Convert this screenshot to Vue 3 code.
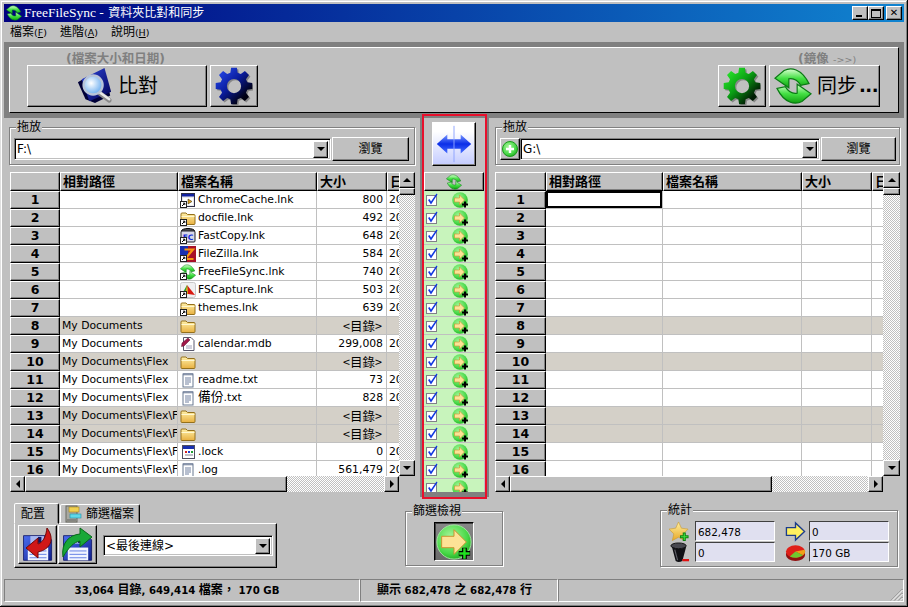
<script setup>
const gearPath = (() => {
  const teeth = 8, c = 20, ro = 19.5, ri = 14.5, step = (Math.PI * 2) / teeth
  let d = ''
  for (let i = 0; i < teeth; i++) {
    const a = i * step - Math.PI / 2
    const pts = [[ri, a - step * 0.34], [ro, a - step * 0.2], [ro, a + step * 0.2], [ri, a + step * 0.34]]
    pts.forEach(([r, t], j) => {
      d += (i === 0 && j === 0 ? 'M' : 'L') + (c + r * Math.cos(t)).toFixed(2) + ' ' + (c + r * Math.sin(t)).toFixed(2) + ' '
    })
  }
  return d + 'Z M20 12.5 A7.5 7.5 0 1 0 20 27.5 A7.5 7.5 0 1 0 20 12.5 Z'
})()

const leftRows = [
  { path: '', icon: 'win', lnk: true, name: 'ChromeCache.lnk', size: '800', date: '20' },
  { path: '', icon: 'folder', lnk: true, name: 'docfile.lnk', size: '492', date: '20' },
  { path: '', icon: 'fc', lnk: true, name: 'FastCopy.lnk', size: '648', date: '20' },
  { path: '', icon: 'fz', lnk: true, name: 'FileZilla.lnk', size: '584', date: '20' },
  { path: '', icon: 'sync', lnk: true, name: 'FreeFileSync.lnk', size: '740', date: '20' },
  { path: '', icon: 'fsc', lnk: true, name: 'FSCapture.lnk', size: '503', date: '20' },
  { path: '', icon: 'folder', lnk: true, name: 'themes.lnk', size: '639', date: '20' },
  { path: 'My Documents', icon: 'folder', name: '', size: '<目錄>', dir: true },
  { path: 'My Documents', icon: 'mdb', name: 'calendar.mdb', size: '299,008', date: '20' },
  { path: 'My Documents\\Flex', icon: 'folder', name: '', size: '<目錄>', dir: true },
  { path: 'My Documents\\Flex', icon: 'txt', name: 'readme.txt', size: '73', date: '20' },
  { path: 'My Documents\\Flex', icon: 'txt', cjk: '備份', name: '.txt', size: '828', date: '20' },
  { path: 'My Documents\\Flex\\Flex', icon: 'folder', name: '', size: '<目錄>', dir: true },
  { path: 'My Documents\\Flex\\Flex', icon: 'folder', name: '', size: '<目錄>', dir: true },
  { path: 'My Documents\\Flex\\Flex', icon: 'lock', name: '.lock', size: '0', date: '20' },
  { path: 'My Documents\\Flex\\Flex', icon: 'txt', name: '.log', size: '561,479', date: '20' }
]
const rightRows = leftRows.map((r) => ({ path: '', icon: '', name: '', size: '', date: '', dir: r.dir }))
const panes = [
  { key: 'l', value: 'F:\\', rows: leftRows, right: false },
  { key: 'r', value: 'G:\\', rows: rightRows, right: true }
]
const midRows = Array.from({ length: 17 }, (_, i) => i)
const headers = ['相對路徑', '檔案名稱', '大小', '日']
</script>

<template>
  <div class="window">
    <svg class="defs" aria-hidden="true">
      <defs>
        <linearGradient id="gBlue" x1="0" y1="0" x2="1" y2="1"><stop offset="0" stop-color="#2a50f8" /><stop offset=".45" stop-color="#0a1c9c" /><stop offset=".8" stop-color="#000010" /></linearGradient>
        <linearGradient id="gGreen" x1="0" y1="0" x2="1" y2="1"><stop offset="0" stop-color="#30f830" /><stop offset=".45" stop-color="#0aa014" /><stop offset=".8" stop-color="#001c04" /></linearGradient>
        <linearGradient id="gSync" x1="0" y1="0" x2="0" y2="1"><stop offset="0" stop-color="#d8ffd0" /><stop offset=".5" stop-color="#44e044" /><stop offset="1" stop-color="#10a010" /></linearGradient>
        <radialGradient id="gBall" cx=".4" cy=".35" r=".7"><stop offset="0" stop-color="#a8f59a" /><stop offset=".7" stop-color="#48d848" /><stop offset="1" stop-color="#20a820" /></radialGradient>
        <radialGradient id="gLens" cx=".4" cy=".4" r=".6"><stop offset="0" stop-color="#fff" /><stop offset="1" stop-color="#70b0f0" /></radialGradient>
        <linearGradient id="gSheet" x1="0" y1="0" x2="1" y2="1"><stop offset="0" stop-color="#3048e0" /><stop offset="1" stop-color="#000050" /></linearGradient>
        <linearGradient id="gSwap" x1="0" y1="0" x2="0" y2="1"><stop offset="0" stop-color="#7a98ff" /><stop offset=".5" stop-color="#0a2ee8" /><stop offset="1" stop-color="#4a70ff" /></linearGradient>
        <linearGradient id="gFolder" x1="0" y1="0" x2="0" y2="1"><stop offset="0" stop-color="#fff0a8" /><stop offset="1" stop-color="#e8b040" /></linearGradient>
        <linearGradient id="gDisk" x1="0" y1="0" x2="1" y2="1"><stop offset="0" stop-color="#4a6cf0" /><stop offset="1" stop-color="#10208c" /></linearGradient>
        <linearGradient id="gStar" x1="0" y1="0" x2="0" y2="1"><stop offset="0" stop-color="#fff0a0" /><stop offset="1" stop-color="#e8a828" /></linearGradient>

        <symbol id="sync" viewBox="0 0 32 32">
          <g fill="url(#gSync)" stroke="#0a7a14" stroke-width="1">
            <path d="M0.8 9.5 L8.5 3 C14 0 23 1 29.5 14 L22.5 15.5 C19.5 10.5 15.5 9.5 12.5 10 L12.5 17.5 Z" />
            <path d="M31.2 22.5 L23.5 29 C18 32 9 31 2.5 18 L9.5 16.5 C12.5 21.5 16.5 22.5 19.5 22 L19.5 14.5 Z" />
          </g>
        </symbol>
        <symbol id="cmp" viewBox="0 0 40 40">
          <polygon points="2,16 10,34 20,38 36,30 30,4 12,10" fill="#000038" />
          <polygon points="6,13 30,1 37,26 14,36" fill="url(#gSheet)" />
          <path d="M24 27 L35 35" stroke="#8a8a8a" stroke-width="5" stroke-linecap="round" />
          <path d="M24 26 L35 34" stroke="#e8e8e8" stroke-width="2.5" stroke-linecap="round" />
          <circle cx="18" cy="19" r="10" fill="url(#gLens)" stroke="#b8c4d8" stroke-width="2.5" />
        </symbol>
        <symbol id="gearB" viewBox="0 0 40 40">
          <path :d="gearPath" transform="translate(1.5 1.5)" fill="#606060" fill-rule="evenodd" opacity=".6" />
          <path :d="gearPath" fill="url(#gBlue)" fill-rule="evenodd" />
        </symbol>
        <symbol id="gearG" viewBox="0 0 40 40">
          <path :d="gearPath" transform="translate(1.5 1.5)" fill="#606060" fill-rule="evenodd" opacity=".6" />
          <path :d="gearPath" fill="url(#gGreen)" fill-rule="evenodd" />
        </symbol>
        <symbol id="swap" viewBox="0 0 44 44">
          <path d="M4 22 L15 12 L15 17 L29 17 L29 12 L40 22 L29 32 L29 27 L15 27 L15 32 Z" fill="url(#gSwap)" />
          <path d="M22 3 V41" stroke="#8ea4ff" stroke-width="1" />
        </symbol>
        <symbol id="add" viewBox="0 0 16 16">
          <circle cx="8" cy="8" r="7.5" fill="url(#gBall)" stroke="#1a9a1a" />
          <path d="M8 4 V12 M4 8 H12" stroke="#fff" stroke-width="2.4" />
        </symbol>
        <symbol id="chk" viewBox="0 0 12 13">
          <rect x=".5" y="2.5" width="10" height="10" fill="#fff" stroke="#808088" />
          <path d="M2 7 L3.5 6 L5 8.5 L10.5 0.5 L11.5 1.5 L5 11.5 Z" fill="#1038e0" />
        </symbol>
        <symbol id="go" viewBox="0 0 16 16">
          <circle cx="8" cy="8" r="7.8" fill="url(#gBall)" />
          <path d="M2.5 6 H7.5 V3 L12.5 8 L7.5 13 V10 H2.5 Z" fill="#fde296" stroke="#c8902a" stroke-width=".6" />
          <path d="M13 9.5 V15.5 M10 12.5 H16" stroke="#000" stroke-width="2" />
        </symbol>
        <symbol id="goBig" viewBox="0 0 40 40">
          <circle cx="20" cy="20" r="18" fill="url(#gBall)" stroke="#a0e8a0" />
          <path d="M7 14 H20 V7 L33 20 L20 33 V26 H7 Z" fill="#fde296" stroke="#c8902a" />
          <path d="M31 26 V38 M25 32 H37" stroke="#000" stroke-width="5" />
          <path d="M31 26.5 V37.5 M25.5 32 H36.5" stroke="#20e020" stroke-width="2.6" />
        </symbol>
        <symbol id="sc" viewBox="0 0 7 7">
          <rect x=".5" y=".5" width="6" height="6" fill="#fff" stroke="#222" />
          <path d="M2 5 L4.5 2.5 M3 2.2 H4.8 V4" stroke="#000" fill="none" />
        </symbol>
        <symbol id="win" viewBox="0 0 16 16">
          <rect x="1.5" y="1.5" width="13" height="13" fill="#e8e8e8" stroke="#303048" />
          <rect x="2" y="2" width="12" height="2.5" fill="#1020a0" />
          <rect x="3" y="6" width="10" height="7" fill="#fff" />
          <path d="M8 7 L12 9.5 L8 12 Z" fill="#d8a020" stroke="#302000" stroke-width=".5" />
        </symbol>
        <symbol id="folder" viewBox="0 0 16 16">
          <path d="M1 13.5 V4 Q1 3 2 3 H6 L7.5 4.5 H14 Q15 4.5 15 5.5 V13.5 Q15 14.5 14 14.5 H2 Q1 14.5 1 13.5 Z" fill="url(#gFolder)" stroke="#94701c" />
          <path d="M1.5 6.5 H14.5" stroke="#fff8d0" />
        </symbol>
        <symbol id="fc" viewBox="0 0 16 16">
          <ellipse cx="8" cy="3" rx="6.5" ry="2.5" fill="#505058" stroke="#000" />
          <rect x="1" y="3" width="14" height="11" rx="1" fill="#d8d8e8" stroke="#202028" />
          <text x="8" y="12" text-anchor="middle" font-family="DejaVu Sans" font-weight="700" font-size="7.5" fill="#1028d8">FC</text>
        </symbol>
        <symbol id="fz" viewBox="0 0 16 16">
          <rect width="16" height="16" fill="#a81028" />
          <rect width="8" height="9" fill="#1830b0" />
          <path d="M4.5 3.5 H13 L5 13 H13.5" fill="none" stroke="#f89810" stroke-width="2.2" />
        </symbol>
        <symbol id="fsc" viewBox="0 0 16 16">
          <rect x=".5" y=".5" width="15" height="15" rx="2" fill="#f0f0f0" stroke="#c8c8c8" />
          <path d="M7 3 L15 13 L8 12 Z" fill="#d81810" />
          <path d="M7 3 L1.5 13 L8 12 Z" fill="#20a030" />
          <path d="M7 3 L8 12 L5 12 Z" fill="#f0a010" />
        </symbol>
        <symbol id="mdb" viewBox="0 0 16 16">
          <path d="M3.5 1.5 H11 L14 4.5 V14.5 H3.5 Z" fill="#fff" stroke="#58586c" />
          <path d="M2 7 L8 2 L10 4 L4 10 L1.5 10.5 Z" fill="#a01848" stroke="#601030" stroke-width=".5" />
          <path d="M6 12 H12 M6 10 H12" stroke="#a0a0b8" />
        </symbol>
        <symbol id="txt" viewBox="0 0 16 16">
          <rect x="3" y="2" width="10" height="13" fill="#fff" stroke="#687890" />
          <path d="M4 1 V3.5 M6 1 V3.5 M8 1 V3.5 M10 1 V3.5 M12 1 V3.5" stroke="#607090" />
          <path d="M5 6 H11 M5 8 H11 M5 10 H11 M5 12 H9" stroke="#7080a0" />
        </symbol>
        <symbol id="lock" viewBox="0 0 16 16">
          <rect x="2.5" y="1.5" width="12" height="13" fill="#fff" stroke="#505060" />
          <rect x="3" y="2" width="11" height="3" fill="#1830b0" />
          <rect x="5" y="7" width="2" height="2" fill="#d82020" /><rect x="8" y="7" width="2" height="2" fill="#2040d0" /><rect x="11" y="7" width="2" height="2" fill="#20a030" />
          <path d="M5 11 H13" stroke="#808090" />
        </symbol>
        <symbol id="floppy" viewBox="0 0 40 40">
          <path d="M3 9 H31 L36 14 V38 H3 Z" fill="url(#gDisk)" stroke="#101868" />
          <rect x="11" y="9.5" width="16" height="9" fill="#a8b8f0" />
          <rect x="20" y="10.5" width="4" height="7" fill="#101868" />
          <rect x="8" y="23" width="24" height="15" fill="#f0f4ff" />
          <path d="M10 27 H30 M10 31 H30 M10 35 H30" stroke="#5070e0" />
        </symbol>
        <symbol id="cab" viewBox="0 0 18 18">
          <rect x="2" y="1" width="11" height="16" fill="#a8a8a0" stroke="#686860" />
          <rect x="5" y="2" width="10" height="5" fill="#f0d050" stroke="#a08020" stroke-width=".6" />
          <rect x="6" y="9" width="11" height="4" fill="#60d8e8" stroke="#2090a8" stroke-width=".6" />
          <path d="M3 15 H12" stroke="#606060" />
        </symbol>
        <symbol id="star" viewBox="0 0 22 22">
          <path d="M10 1 L13 7.5 L20 8.5 L15 13.5 L16.5 20.5 L10 17 L3.5 20.5 L5 13.5 L0 8.5 L7 7.5 Z" fill="url(#gStar)" stroke="#c89828" stroke-width=".6" />
          <path d="M16 12 V21 M11.5 16.5 H20.5" stroke="#108010" stroke-width="3.2" />
          <path d="M16 13 V20 M12.5 16.5 H19.5" stroke="#40e040" stroke-width="1.2" />
        </symbol>
        <symbol id="trash" viewBox="0 0 22 22">
          <ellipse cx="10" cy="4" rx="8" ry="3" fill="#484850" stroke="#101010" />
          <path d="M3 5 L7 20 Q10 22 14 20 L18 5 Q10 9 3 5 Z" fill="#101014" />
          <path d="M6 8 L9 19" stroke="#606068" stroke-width="1.2" />
          <path d="M14 19 H21" stroke="#e01010" stroke-width="2.4" />
        </symbol>
        <symbol id="yarrow" viewBox="0 0 22 22">
          <path d="M1.5 7 H11 V2 L20.5 11 L11 20 V15 H1.5 Z" fill="#fff060" stroke="#1c3c8c" stroke-width="1.4" />
        </symbol>
        <symbol id="pie" viewBox="0 0 22 22">
          <ellipse cx="11" cy="13.5" rx="10" ry="6.5" fill="#901010" />
          <ellipse cx="11" cy="10" rx="10" ry="6.5" fill="#e02018" />
          <path d="M11 10 L20.5 8 A10 6.5 0 0 1 19 14 Z" fill="#f0a018" />
          <path d="M11 10 L19 14 A10 6.5 0 0 1 5 15.2 Z" fill="#70c830" />
        </symbol>
      </defs>
    </svg>

    <div class="titlebar">
      <svg class="tb-icon"><use href="#sync" /></svg>
      <span class="tb-text">FreeFileSync - <span class="tb-cjk">資料夾比對和同步</span></span>
      <div class="tb-btns">
        <span class="btn tb-btn"><i class="g-min"></i></span>
        <span class="btn tb-btn"><i class="g-max"></i></span>
        <span class="btn tb-btn tb-close">✕</span>
      </div>
    </div>

    <div class="menubar">
      <span>檔案<small>(<u>F</u>)</small></span>
      <span>進階<small>(<u>A</u>)</small></span>
      <span>說明<small>(<u>H</u>)</small></span>
    </div>

    <div class="toppanel">
      <div class="topinner">
        <div class="topblock">
          <div class="hint hint-l">(檔案大小和日期)</div>
          <div class="btnrow">
            <button class="btn compare"><svg class="i38"><use href="#cmp" /></svg><span class="bigtext">比對</span></button>
            <button class="btn gearbtn"><svg class="i38"><use href="#gearB" /></svg></button>
          </div>
        </div>
        <div class="topblock">
          <div class="hint hint-r">(鏡像 <span class="hint-thin">-&gt;&gt;)</span></div>
          <div class="btnrow">
            <button class="btn gearbtn"><svg class="i38"><use href="#gearG" /></svg></button>
            <button class="btn syncbtn"><svg class="i38"><use href="#sync" /></svg><span class="bigtext">同步</span><b class="dots">...</b></button>
          </div>
        </div>
      </div>
    </div>

    <div class="main">
      <section v-for="p in panes" :key="p.key" class="pane" :class="p.key">
        <div class="group pathgroup">
          <span class="legend">拖放</span>
          <div class="pathrow">
            <button v-if="p.right" class="btn addbtn"><svg class="i16"><use href="#add" /></svg></button>
            <div class="combo pathcombo">
              <span class="combotext">{{ p.value }}</span>
              <span class="btn combobtn"><i class="tri-d"></i></span>
            </div>
            <button class="btn browse">瀏覽</button>
          </div>
        </div>

        <div class="grid">
          <div class="table">
            <div class="row head">
              <div class="btn lbl"></div>
              <div v-for="h in headers" :key="h" class="btn hcell">{{ h }}</div>
            </div>
            <div v-for="(r, i) in p.rows" :key="i" class="row" :class="{ dir: r.dir }">
              <div class="btn lbl">{{ i + 1 }}</div>
              <div class="cell" :class="{ selected: p.right && i === 0 }">{{ r.path }}</div>
              <div class="cell namecell">
                <span v-if="r.icon" class="fileicon">
                  <svg class="i16"><use :href="'#' + r.icon" /></svg>
                  <svg v-if="r.lnk" class="scicon"><use href="#sc" /></svg>
                </span>
                <span class="fname"><span v-if="r.cjk" class="cjk">{{ r.cjk }}</span>{{ r.name }}</span>
              </div>
              <div class="cell sizecell" :class="{ dirsize: r.dir }">{{ r.size }}</div>
              <div class="cell">{{ r.date }}</div>
            </div>
          </div>
          <div class="vs">
            <span class="btn sb"><i class="tri-u"></i></span>
            <span class="btn vthumb"></span>
            <span class="track"></span>
            <span class="btn sb"><i class="tri-d"></i></span>
          </div>
          <div class="hs">
            <span class="btn sb"><i class="tri-l"></i></span>
            <span class="btn hthumb"></span>
            <span class="track"></span>
            <span class="btn sb"><i class="tri-r"></i></span>
          </div>
        </div>
      </section>

      <section class="mid">
        <button class="btn swapbtn"><svg class="i44"><use href="#swap" /></svg></button>
        <div class="midgrid">
          <div class="btn midhead"><svg class="i16"><use href="#sync" /></svg></div>
          <div v-for="m in midRows" :key="m" class="midrow">
            <svg class="chk"><use href="#chk" /></svg>
            <svg class="i16 goicon"><use href="#go" /></svg>
          </div>
        </div>
      </section>
    </div>

    <div class="bottom">
      <div class="cfg">
        <div class="tabs">
          <span class="tab active">配置</span>
          <span class="tab"><svg class="tabicon"><use href="#cab" /></svg>篩選檔案</span>
        </div>
        <div class="tabpanel">
          <button class="btn disk">
            <svg class="i34"><use href="#floppy" /></svg>
            <svg class="swoosh" viewBox="0 0 34 34"><path d="M26 1 C34 12 30 22 17 25 L17 31 L5 21 L17 11 L17 17 C23 15 25 8 26 1 Z" fill="#d01818" stroke="#700808" /></svg>
          </button>
          <button class="btn disk">
            <svg class="i34"><use href="#floppy" /></svg>
            <svg class="swoosh" viewBox="0 0 34 34"><path d="M2 30 C0 16 8 8 19 7 L19 1 L31 10 L19 20 L19 14 C13 15 8 20 2 30 Z" fill="#18a838" stroke="#086818" /></svg>
          </button>
          <div class="combo cfgcombo">
            <span class="combotext">&lt;最後連線&gt;</span>
            <span class="btn combobtn"><i class="tri-d"></i></span>
          </div>
        </div>
      </div>

      <div class="group filtergroup">
        <span class="legend">篩選檢視</span>
        <button class="filterbtn"><svg class="i38"><use href="#goBig" /></svg></button>
      </div>

      <div class="group statsgroup">
        <span class="legend">統計</span>
        <div class="stats">
          <svg class="i21"><use href="#star" /></svg><span class="statbox">682,478</span>
          <svg class="i21"><use href="#yarrow" /></svg><span class="statbox">0</span>
          <svg class="i21"><use href="#trash" /></svg><span class="statbox">0</span>
          <svg class="i21"><use href="#pie" /></svg><span class="statbox">170 GB</span>
        </div>
      </div>
    </div>

    <div class="status">
      <div class="st st1"><span>33,064 <span class="cjk">目錄</span>, 649,414 <span class="cjk">檔案，</span> 170 GB</span></div>
      <div class="st st2"><span><span class="cjk">顯示</span> 682,478 <span class="cjk">之</span> 682,478 <span class="cjk">行</span></span></div>
      <div class="st st3">
        <svg class="grip" viewBox="0 0 13 13"><path d="M12.5 1 L1 12.5 M12.5 5 L5 12.5 M12.5 9 L9 12.5" stroke="#808080" fill="none" /><path d="M12.5 2 L2 12.5 M12.5 6 L6 12.5 M12.5 10 L10 12.5" stroke="#fff" fill="none" /></svg>
      </div>
    </div>

    <div class="redbox"></div>
  </div>
</template>

<style>
html, body { margin: 0; background: #c0c0c0; }
</style>

<style scoped>
* { box-sizing: border-box; }
.window {
  --f: "DejaVu Sans", "Noto Sans CJK TC", sans-serif;
  position: relative;
  width: 908px;
  height: 607px;
  padding: 4px 4px 5px;
  display: flex;
  flex-direction: column;
  overflow: hidden;
  background: #c0c0c0;
  color: #000;
  font: 12px/14px var(--f);
  box-shadow: inset -1px -1px #000, inset 1px 1px #dfdfdf, inset -2px -2px #808080, inset 2px 2px #fff;
}
.defs { position: absolute; width: 0; height: 0; }
.btn {
  display: flex;
  align-items: center;
  justify-content: center;
  padding: 0;
  font: inherit;
  color: inherit;
  background: #c0c0c0;
  border: 1px solid;
  border-color: #fff #000 #000 #fff;
  box-shadow: inset -1px -1px #808080;
}
i { display: block; width: 0; height: 0; border-style: solid; border-color: transparent; }
.tri-d { border-width: 4px 4px 0; border-top-color: #000; }
.tri-u { border-width: 0 4px 4px; border-bottom-color: #000; }
.tri-l { border-width: 4px 4px 4px 0; border-right-color: #000; }
.tri-r { border-width: 4px 0 4px 4px; border-left-color: #000; }
.i16 { width: 16px; height: 16px; display: block; }
.i21 { width: 21px; height: 21px; display: block; }
.i34 { width: 34px; height: 34px; display: block; }
.i38 { width: 38px; height: 38px; display: block; }
.i44 { width: 42px; height: 42px; display: block; }

.titlebar {
  height: 18px;
  flex: none;
  display: flex;
  align-items: center;
  padding-left: 2px;
  background: linear-gradient(90deg, #000080, #1084d0);
  color: #fff;
}
.tb-icon { width: 16px; height: 16px; flex: none; }
.tb-text { margin-left: 2px; font: 13.5px/18px "Liberation Serif", "Noto Sans CJK TC", serif; white-space: pre; }
.tb-cjk { font-size: 12px; margin-left: 1px; }
.tb-btns { margin-left: auto; margin-right: 2px; display: flex; }
.tb-btn { width: 16px; height: 14px; position: relative; }
.tb-close { margin-left: 2px; font-size: 10px; line-height: 1; font-weight: 700; color: #000; }
.g-min { width: 6px; height: 2px; background: #000; border: 0; margin-top: 6px; margin-right: 3px; }
.g-max { width: 10px; height: 9px; border: 1px solid #000; border-top-width: 2px; }

.menubar {
  height: 20px;
  flex: none;
  display: flex;
  gap: 13px;
  align-items: center;
  padding-left: 6px;
  font-size: 12px;
}
.menubar small { font-size: 9.5px; }

.toppanel { height: 76px; flex: none; padding: 5px; background: #808080; }
.topinner {
  height: 66px;
  display: flex;
  justify-content: space-between;
  padding: 4px 18px 0 17px;
  background: #c0c0c0;
  border: 1px solid;
  border-color: #fff #000 #000 #fff;
}
.hint { height: 13px; font-weight: 700; color: #808080; font-size: 12.5px; line-height: 13px; white-space: nowrap; }
.hint-l { padding-left: 39px; }
.hint-r { padding-left: 80px; }
.hint-thin { font-weight: 400; font-size: 9.5px; }
.btnrow { display: flex; gap: 3px; margin-top: 0; }
.compare { width: 180px; height: 42px; gap: 4px; }
.gearbtn { width: 48px; height: 42px; }
.syncbtn { width: 111px; height: 42px; gap: 5px; justify-content: flex-start; padding-left: 4px; }
.bigtext { font-size: 20px; letter-spacing: 0; line-height: 24px; }
.dots { font-size: 18px; font-weight: 700; letter-spacing: -.5px; margin-left: -3px; }

.main { height: 379px; flex: none; display: flex; }
.pane { flex: none; padding-top: 9px; }
.pane.l { width: 416px; padding-left: 5px; order: 1; }
.pane.r { width: 415px; padding-left: 6px; order: 3; }
.mid {
  order: 2;
  width: 69px;
  flex: none;
  padding-top: 4px;
  border: solid #808080;
  border-width: 0 4px 5px;
}

.group {
  border: 1px solid #808080;
  box-shadow: inset 1px 1px #fff, 1px 1px #fff;
}
.legend {
  display: block;
  width: fit-content;
  height: 14px;
  margin: -8px 0 0 6px;
  padding: 0 1px;
  font-size: 12px;
  line-height: 14px;
  background: #c0c0c0;
}
.pathgroup { width: 406px; height: 38px; }
.pane.r .pathgroup { width: 405px; }
.pathrow { display: flex; margin-top: 3px; padding: 0 5px 0 4px; align-items: center; }
.pane.r .pathrow { padding-right: 3px; }
.addbtn { width: 20px; height: 22px; flex: none; }
.combo {
  display: flex;
  align-items: center;
  background: #fff;
  border: 1px solid;
  border-color: #808080 #fff #fff #808080;
  box-shadow: inset 1px 1px #000, inset -1px -1px #c0c0c0;
  padding: 2px;
}
.pathcombo { flex: 1; height: 22px; min-width: 0; }
.combotext { flex: 1; white-space: nowrap; overflow: hidden; }
.combobtn { width: 15px; height: 17px; flex: none; }
.browse { width: 77px; height: 24px; flex: none; margin-left: 1px; }
.pane.r .browse { width: 75px; }

.grid {
  margin-top: 7px;
  margin-left: 1px;
  width: 405px;
  height: 320px;
  display: grid;
  grid-template-columns: 389px 16px;
  grid-template-rows: 304px 16px;
}
.pane.r .grid { margin-left: 0; grid-template-columns: 388px 17px; }
.table { overflow: hidden; background: #fff; }
.row { display: grid; height: 18px; grid-template-columns: 50px 118px 139px 70px 70px; background: #fff; }
.pane.r .row { grid-template-columns: 51px 117px 139px 70px 70px; }
.row.head { height: 19px; background: #c0c0c0; }
.row.dir, .row.dir .cell { background: #d4d0c8; }
.lbl { font-weight: 700; font-size: 12.5px; }
.hcell { font-weight: 700; font-size: 13px; justify-content: flex-start; padding-left: 2px; overflow: hidden; white-space: nowrap; }
.cell {
  border-right: 1px solid #c0c0c0;
  border-bottom: 1px solid #c0c0c0;
  padding: 1px 1px 0 2px;
  white-space: nowrap;
  overflow: hidden;
  font-size: 10.8px;
  line-height: 15px;
}
.cjk { font-size: 1.18em; line-height: 1; }
.cell.selected { box-shadow: inset 0 0 0 2px #000; }
.namecell { display: flex; align-items: center; gap: 2px; padding: 0 0 0 2px; }
.fname { font-size: 10.8px; }
.fileicon { position: relative; width: 16px; height: 16px; flex: none; }
.scicon { position: absolute; left: 0; bottom: 0; width: 7px; height: 7px; }
.sizecell { text-align: right; padding-right: 3px; }
.dirsize { padding-right: 4px; font: 12.5px/15px "Noto Sans CJK TC", sans-serif; }

.vs { display: flex; flex-direction: column; height: 304px; }
.vs .sb { height: 16px; flex: none; }
.vthumb { height: 7px; flex: none; }
.track {
  flex: 1;
  background: repeating-conic-gradient(#fff 0 25%, #c0c0c0 0 50%) 0 0 / 2px 2px;
}
.hs { display: flex; height: 16px; }
.hs .sb { width: 15px; flex: none; }
.hthumb { width: 262px; flex: none; }

.swapbtn {
  width: 44px;
  height: 44px;
  margin: 0 0 6px 8px;
  background: linear-gradient(#fff 20%, #c4ccff);
}
.midgrid { width: 60px; height: 320px; overflow: hidden; }
.midhead { height: 19px; }
.midrow {
  height: 18px;
  display: flex;
  align-items: center;
  background: #c8f4bc;
  border-bottom: 1px solid #c0c0c0;
  padding-left: 2px;
}
.chk { width: 12px; height: 13px; flex: none; }
.goicon { margin-left: 14px; }

.bottom { height: 82px; flex: none; display: flex; align-items: flex-start; }
.cfg { margin: 6px 0 0 10px; width: 263px; }
.tabs { display: flex; align-items: flex-end; height: 20px; }
.tab {
  height: 19px;
  display: flex;
  align-items: center;
  padding: 0 3px;
  font-size: 12px;
  white-space: nowrap;
  background: #c0c0c0;
  border: 1px solid;
  border-color: #fff #000 transparent #fff;
  border-radius: 2px 2px 0 0;
  box-shadow: inset -1px 0 #808080;
}
.tab.active { height: 21px; width: 45px; padding-left: 6px; margin-bottom: -1px; position: relative; z-index: 1; }
.tab:not(.active) { margin-left: 1px; width: 80px; }
.tabicon { width: 18px; height: 18px; margin-right: 4px; flex: none; }
.tabpanel {
  height: 45px;
  display: flex;
  align-items: flex-start;
  padding: 1px 0 0 3px;
  background: #c0c0c0;
  border: 1px solid;
  border-color: #fff #000 #000 #fff;
  box-shadow: inset -1px -1px #808080;
}
.disk { width: 39px; height: 39px; margin-right: 1px; position: relative; flex: none; }
.swoosh { position: absolute; left: 2px; top: 1px; width: 34px; height: 34px; }
.cfgcombo { width: 170px; height: 21px; margin: 10px 0 0 5px; }
.cfgcombo .combobtn { height: 16px; }
.cfgcombo .combotext { font-size: 12px; }

.filtergroup { width: 98px; height: 55px; margin: 14px 0 0 128px; }
.filterbtn {
  display: flex;
  align-items: center;
  justify-content: center;
  padding: 0;
  width: 40px;
  height: 39px;
  margin: 4px 0 0 28px;
  background: linear-gradient(#888, #6a6a6a);
  border: 1px solid;
  border-color: #000 #fff #fff #000;
  box-shadow: inset 1px 1px #404040;
}
.statsgroup { width: 238px; height: 57px; margin: 13px 0 0 157px; }
.stats {
  display: grid;
  grid-template-columns: 26px 90px 24px 80px;
  grid-auto-rows: 20px;
  row-gap: 1px;
  margin-top: 4px;
  padding-left: 8px;
  align-items: center;
}
.statbox {
  display: block;
  width: 80px;
  height: 20px;
  padding: 3px 0 0 2px;
  font-size: 10.4px;
  background: #e0e0f0;
  border: 1px solid;
  border-color: #404040 #fff #fff #404040;
}

.status { height: 23px; flex: none; display: flex; font-weight: 700; font-size: 10.2px; }
.st {
  display: flex;
  align-items: center;
  justify-content: center;
  border: 1px solid;
  border-color: #808080 #fff #fff #808080;
  white-space: nowrap;
}
.st1 { width: 356px; padding-right: 10px; }
.st2 { width: 198px; padding-right: 9px; }
.st3 { flex: 1; justify-content: flex-end; align-items: flex-end; }
.grip { width: 13px; height: 13px; display: block; }

.redbox {
  position: absolute;
  left: 422px;
  top: 114px;
  width: 65px;
  height: 385px;
  border: 2px solid #e8102c;
  pointer-events: none;
}
</style>
